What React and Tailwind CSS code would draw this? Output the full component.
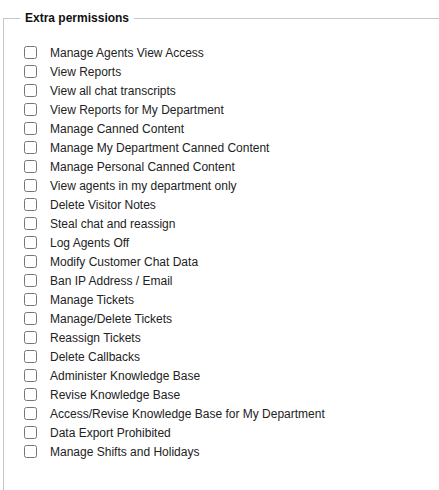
import React from "react";

const items = [
  "Manage Agents View Access",
  "View Reports",
  "View all chat transcripts",
  "View Reports for My Department",
  "Manage Canned Content",
  "Manage My Department Canned Content",
  "Manage Personal Canned Content",
  "View agents in my department only",
  "Delete Visitor Notes",
  "Steal chat and reassign",
  "Log Agents Off",
  "Modify Customer Chat Data",
  "Ban IP Address / Email",
  "Manage Tickets",
  "Manage/Delete Tickets",
  "Reassign Tickets",
  "Delete Callbacks",
  "Administer Knowledge Base",
  "Revise Knowledge Base",
  "Access/Revise Knowledge Base for My Department",
  "Data Export Prohibited",
  "Manage Shifts and Holidays",
];

export default function App() {
  return (
    <div className="bg-white w-[439px] h-[490px] overflow-hidden font-['Liberation_Sans',Arial,sans-serif] text-[12px] text-[#222]">
      <fieldset className="ml-[3px] mt-[11px] border-l border-t border-[#c6c6c6] pl-[16px] pb-[40px]">
        <legend className="px-[5px] font-bold leading-[14px] text-[12px] text-[#111]">
          Extra permissions
        </legend>
        <div className="pt-[18px] flex flex-col">
          {items.map((t) => (
            <label key={t} className="h-[19px] flex items-center pl-[4px]">
              <input type="checkbox" className="w-[13px] h-[13px] m-0 shrink-0" />
              <span className="ml-[13px] leading-[14px]">{t}</span>
            </label>
          ))}
        </div>
      </fieldset>
    </div>
  );
}
